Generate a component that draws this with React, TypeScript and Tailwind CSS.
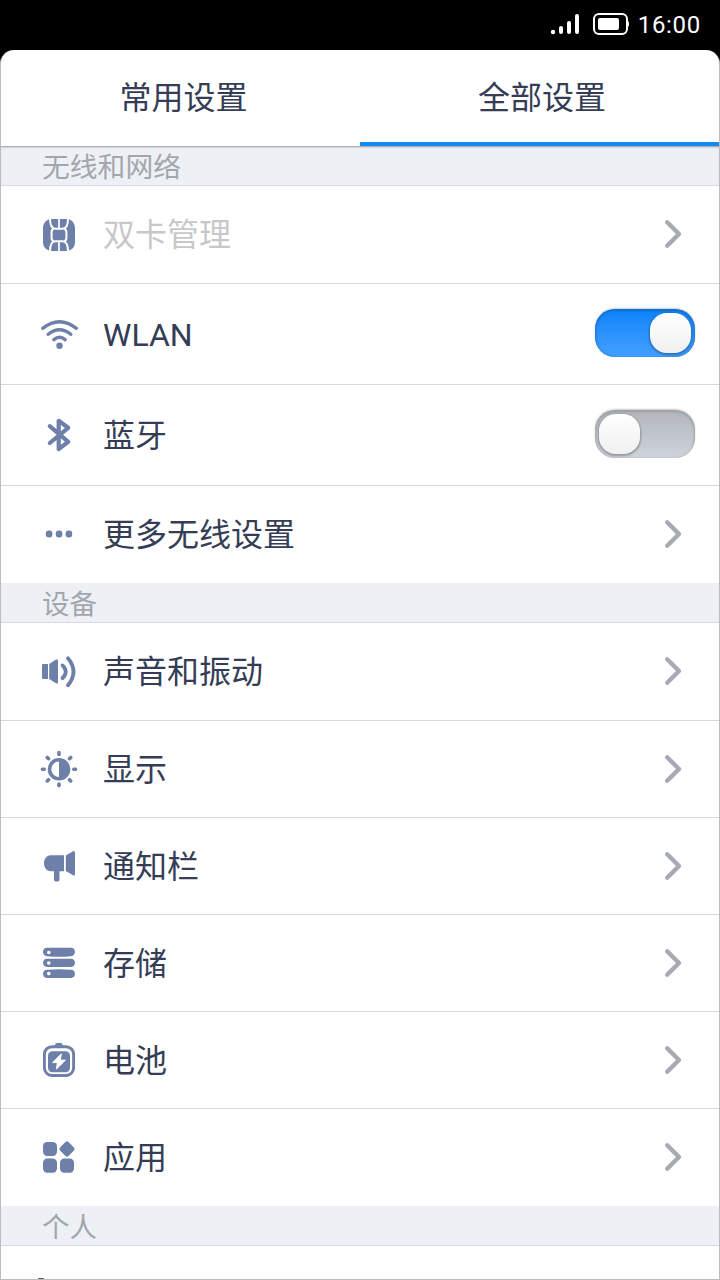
import type { ReactNode } from "react";

const C = "#6e80a9";

function Icon({ children }: { children: ReactNode }) {
  return (
    <svg className="mt-7 h-10 w-10 shrink-0" viewBox="0 0 40 40" fill={C} stroke="none">
      {children}
    </svg>
  );
}

const SimIcon = () => (
  <Icon>
    <rect x="4" y="5" width="32" height="32" rx="8.5" />
    <g fill="none" stroke="#fff" strokeWidth="2">
      <path d="M11 4.5C11 10 12 14.8 16.5 14.8H23.5C28 14.8 29 10 29 4.5" />
      <path d="M11 37.5C11 32 12 27.2 16.5 27.2H23.5C28 27.2 29 32 29 37.5" />
      <path d="M15 14.6Q12.6 15.4 12.6 18V24Q12.6 26.6 15 27.4M25 14.6Q27.4 15.4 27.4 18V24Q27.4 26.6 25 27.4" />
      <path d="M20 5V14.5M20 27.5V37" strokeWidth="1.7" />
    </g>
  </Icon>
);

const WifiIcon = () => (
  <Icon>
    <g fill="none" stroke={C} strokeWidth="3.4" strokeLinecap="round">
      <path d="M3.7 16.3Q20.5 3 37.3 16.3" />
      <path d="M9.2 22.3Q20.5 13 31.8 22.3" />
      <path d="M14.8 27.6Q20.5 22.8 26.2 27.6" />
    </g>
    <circle cx="20.5" cy="33.8" r="3.2" />
  </Icon>
);

const BluetoothIcon = () => (
  <Icon>
    <path
      d="M10.8 13.2L29.2 28.8L19.7 36V7.8L29.2 14.8L10.8 30"
      fill="none"
      stroke={C}
      strokeWidth="4.2"
      strokeLinecap="round"
      strokeLinejoin="round"
    />
  </Icon>
);

const MoreIcon = () => (
  <Icon>
    <rect x="6.8" y="16.6" width="6.6" height="6.8" rx="2.9" />
    <rect x="16.8" y="16.6" width="6.6" height="6.8" rx="2.9" />
    <rect x="26.6" y="16.6" width="6.6" height="6.8" rx="2.9" />
  </Icon>
);

const SoundIcon = () => (
  <Icon>
    <path d="M4 13H9V28H4Q3 28 3 27V14Q3 13 4 13Z" />
    <path d="M10.2 13L17 8.6Q19 8 19 9.6V31.2Q19 33 17 32.3L10.2 28Z" />
    <g fill="none" stroke={C} strokeWidth="3.8" strokeLinecap="round">
      <path d="M23.5 14.4Q30 20.7 23.5 27.2" />
      <path d="M29 7.2Q40 20.7 29 34.2" />
    </g>
  </Icon>
);

const DisplayIcon = () => (
  <Icon>
    <circle cx="20" cy="20.2" r="9.5" fill="#fff" stroke={C} strokeWidth="3.6" />
    <path d="M20 11V29.4A9.2 9.2 0 0 0 20 11Z" />
    <path
      d="M20 3.6V5.4M20 35V36.8M3.4 20.2H5.2M34.8 20.2H36.6M8.3 8.5L9.5 9.7M30.5 30.7L31.7 31.9M31.7 8.5L30.5 9.7M9.5 30.7L8.3 31.9"
      fill="none"
      stroke={C}
      strokeWidth="3.6"
      strokeLinecap="round"
    />
  </Icon>
);

const NoticeIcon = () => (
  <Icon>
    <path d="M25 9.3V25.2H20.5V33.8Q20.5 35.5 18.8 35.5H16.6Q15 35.5 15 33.8V25.2H11.5C7.5 25.2 5 21 5 17.2C5 13.3 7.5 9.3 11.5 9.3Z" />
    <path d="M26.8 9.4L34 5.2Q36 4.6 36 6.6V28Q36 30 34 29.3L26.8 25Z" />
  </Icon>
);

const StorageIcon = () => (
  <Icon>
    <path d="M8 4.8H32C37.3 4.8 37.3 13.2 32 13.2Q20 14.2 8 13.2C2.7 13.2 2.7 4.8 8 4.8Z" />
    <path d="M8 15.8H32C37.3 15.8 37.3 24 32 24H8C2.7 24 2.7 15.8 8 15.8Z" />
    <path d="M8 26.8Q20 25.8 32 26.8C37.3 26.8 37.3 35 32 35H8C2.7 35 2.7 26.8 8 26.8Z" />
    <g fill="#fff">
      <circle cx="9.8" cy="9.5" r="1.8" />
      <circle cx="9.8" cy="20" r="1.8" />
      <circle cx="9.8" cy="30.6" r="1.8" />
    </g>
  </Icon>
);

const BatteryIcon = () => (
  <Icon>
    <rect x="16" y="3" width="7.6" height="5" rx="2" />
    <rect x="5.4" y="6.7" width="29.2" height="28.8" rx="7.5" fill="#fff" stroke={C} strokeWidth="2.9" />
    <rect x="9" y="11.2" width="22" height="21" rx="4.5" />
    <path
      d="M22.3 13.8L13.6 22.6H18.4L17.4 29L26.4 20.2H21.4Z"
      fill="#fff"
      strokeLinejoin="round"
      stroke="#fff"
      strokeWidth="1"
    />
  </Icon>
);

const AppsIcon = () => (
  <Icon>
    <rect x="4" y="5" width="14" height="14" rx="4.2" />
    <rect x="4" y="21.6" width="14" height="14.2" rx="4.2" />
    <rect x="21" y="21.6" width="14" height="14.2" rx="4.2" />
    <rect x="22" y="6" width="12" height="12" rx="2.2" transform="rotate(45 28 12)" />
  </Icon>
);

function Chevron() {
  return (
    <svg className="mr-9 mb-px h-8 w-5" viewBox="0 0 20 32" fill="none" stroke="#a6aab2" strokeWidth="4.4">
      <path d="M4.2 4.3L16 16L4.2 27.7" strokeLinecap="round" strokeLinejoin="round" />
    </svg>
  );
}

function Toggle({ on }: { on: boolean }) {
  return (
    <div
      className={
        on
          ? "mr-6 mb-0.5 flex h-12 w-[100px] justify-end rounded-[20px] bg-linear-to-b from-[#0783fb] to-[#429fff] px-1 pt-1 shadow-[inset_0_1px_2px_1px_#1767b3b0,0_-1px_2px_#ccc]"
          : "mr-6 mb-0.5 flex h-12 w-[100px] justify-start rounded-[20px] bg-linear-to-b from-[#b2b6bc] to-[#cfd3da] px-1 pt-1 shadow-[inset_0_1px_2px_1px_#92959bb0,0_-1px_2px_#ccc]"
      }
    >
      <div className="h-10 w-[41px] rounded-[17px] bg-linear-to-b from-white to-[#f0f0f1] shadow-[0_1px_2px_1px_#00000045]" />
    </div>
  );
}

function Section({ title }: { title: string }) {
  return (
    <div className="h-10 border-b border-[#d7dbe1] bg-[#edf1f6] pl-[41px] text-[27.5px] leading-[44px] text-[#a3a6ac]">
      {title}
    </div>
  );
}

type RowProps = {
  icon: ReactNode;
  label: string;
  height: string;
  muted?: boolean;
  toggle?: boolean;
};

function Row({ icon, label, height, muted, toggle }: RowProps) {
  return (
    <div className={`flex pl-[38px] ${height}`}>
      {icon}
      <div
        className={`ml-6 flex flex-1 items-center pt-px text-[32px] leading-none ${muted ? "text-[#c8c8c8]" : "text-[#353d56]"}`}
      >
        {label}
      </div>
      <div className="flex items-center">{toggle === undefined ? <Chevron /> : <Toggle on={toggle} />}</div>
    </div>
  );
}

const first = "h-[98px] border-b border-[#d9d9db]";
const tall = "h-[101px] border-b border-[#d9d9db]";
const mid = "h-[97px] border-b border-[#d9d9db]";
const last = "h-[97px] pb-px";

export default function App() {
  return (
    <div className="flex h-[1280px] w-[720px] flex-col overflow-hidden bg-black font-['Roboto','Noto_Sans_CJK_SC',sans-serif]">
      <div className="flex h-[50px] shrink-0 items-center justify-end pr-[19px] text-white">
        <svg className="mr-px h-6 w-20" viewBox="0 0 80 24" fill="#fff">
          <circle cx="4" cy="19" r="2.2" />
          <rect x="10" y="13" width="4" height="8" rx="2" />
          <rect x="18" y="8" width="4" height="13" rx="2" />
          <rect x="26" y="1" width="4" height="20" rx="2" />
          <rect x="45" y="1" width="33" height="20" rx="5" fill="none" stroke="#fff" strokeWidth="2" />
          <rect x="49" y="5" width="21" height="12" rx="2" />
          <path d="M78.5 8Q80 8 80 11T78.5 14Z" />
        </svg>
        <div className="ml-2 text-2xl leading-6 tracking-[0.7px]">16:00</div>
      </div>
      <div className="flex min-h-0 flex-1 flex-col overflow-hidden rounded-t-[14px] border-x border-b border-[#bcbdc0] bg-white">
        <div className="-mx-px flex h-24 shrink-0 text-[32px] leading-[96px] text-[#353d56]">
          <div className="w-1/2 pl-[7px] text-center">常用设置</div>
          <div className="w-1/2 border-b-4 border-[#1789f2] pl-1 text-center">全部设置</div>
        </div>
        <div className="h-10 shrink-0 border-b border-[#d7dbe1] bg-[#edf1f6] pl-[41px] text-[27.8px] leading-[43px] text-[#a3a6ac] shadow-[inset_0_2px_2px_-1px_#9298a4]">
          无线和网络
        </div>
        <div className="shrink-0">
          <Row icon={<SimIcon />} label="双卡管理" height={first} muted />
          <Row icon={<WifiIcon />} label="WLAN" height={tall} toggle={true} />
          <Row icon={<BluetoothIcon />} label="蓝牙" height={tall} toggle={false} />
          <Row icon={<MoreIcon />} label="更多无线设置" height={last} />
          <Section title="设备" />
          <Row icon={<SoundIcon />} label="声音和振动" height={first} />
          <Row icon={<DisplayIcon />} label="显示" height={mid} />
          <Row icon={<NoticeIcon />} label="通知栏" height={mid} />
          <Row icon={<StorageIcon />} label="存储" height={mid} />
          <Row icon={<BatteryIcon />} label="电池" height={mid} />
          <Row icon={<AppsIcon />} label="应用" height={last} />
          <Section title="个人" />
          <div className="flex h-[33px] items-end pl-[37px]">
            <div className="h-px w-1.5 rounded-t bg-[#555]" />
          </div>
        </div>
      </div>
    </div>
  );
}
